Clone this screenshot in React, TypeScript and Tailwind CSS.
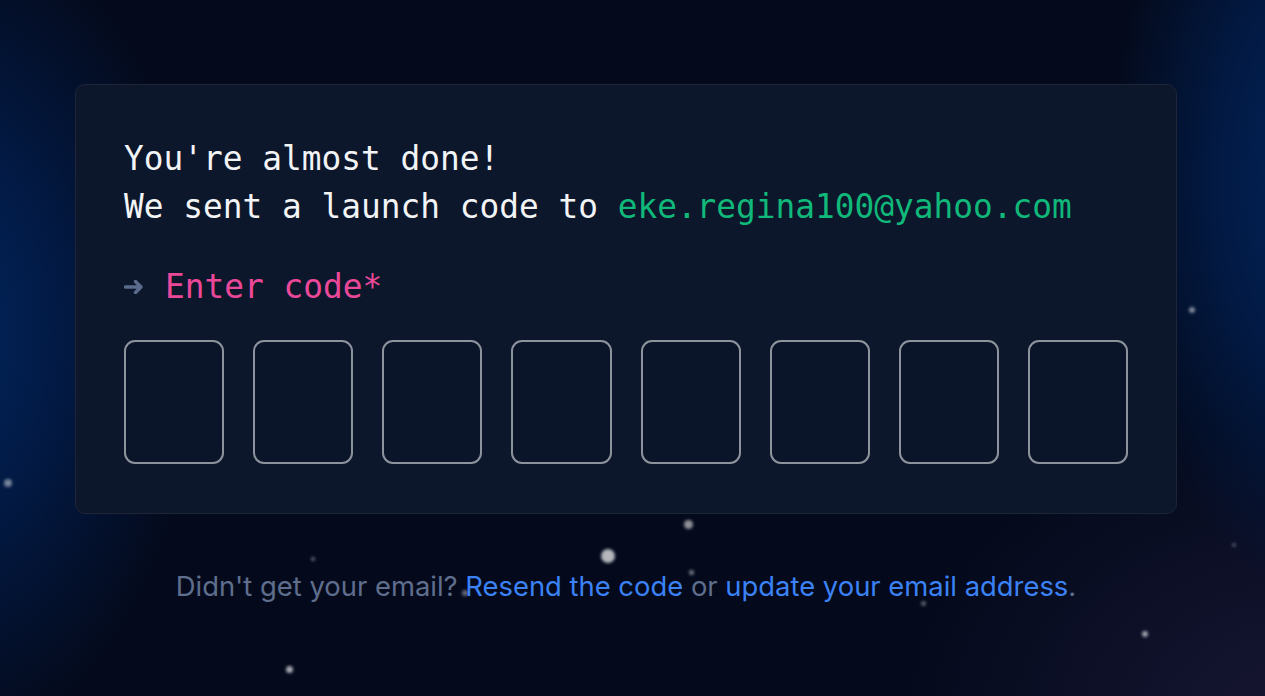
import React from "react";

const stars: { x: number; y: number; s: number; o: number }[] = [
  { x: 1192, y: 310, s: 6, o: 0.5 },
  { x: 8, y: 483, s: 8, o: 0.45 },
  { x: 688, y: 524, s: 9, o: 0.55 },
  { x: 608, y: 556, s: 14, o: 0.7 },
  { x: 313, y: 559, s: 4, o: 0.4 },
  { x: 691, y: 572, s: 5, o: 0.45 },
  { x: 1234, y: 545, s: 4, o: 0.3 },
  { x: 923, y: 603, s: 5, o: 0.35 },
  { x: 465, y: 593, s: 6, o: 0.4 },
  { x: 1145, y: 634, s: 6, o: 0.6 },
  { x: 289, y: 669, s: 7, o: 0.65 },
];

export default function App() {
  const mono = { fontFamily: '"DejaVu Sans Mono", "Liberation Mono", monospace' };
  return (
    <div
      className="relative h-[696px] w-full overflow-hidden bg-[#040a1c] bg-[radial-gradient(ellipse_260px_420px_at_-60px_330px,#01275f_0%,#021a45_45%,transparent_100%),radial-gradient(ellipse_220px_420px_at_1330px_180px,#03265e_0%,#021a44_50%,transparent_100%),radial-gradient(ellipse_400px_300px_at_1300px_720px,#171633_0%,transparent_100%)]"
    >
      {stars.map((st, i) => (
        <div
          key={i}
          className="absolute rounded-full bg-white blur-[1.5px]"
          style={{
            left: st.x - st.s / 2,
            top: st.y - st.s / 2,
            width: st.s,
            height: st.s,
            opacity: st.o,
          }}
        />
      ))}
      <div className="relative flex w-[1252px] flex-col items-center pt-[84px]">
        <div className="w-[1102px] rounded-[10px] border border-[#1e2536] bg-[#0d172c] px-12 pt-[50px] pb-[49px]">
          <div className="text-[32.8px] leading-[48px] text-[#f3f4f6]" style={mono}>
            <div>You're almost done!</div>
            <div>
              We sent a launch code to{" "}
              <span className="text-[#10b97a]">eke.regina100@yahoo.com</span>
            </div>
            <div className="mt-8 flex items-center">
              <svg width="20" height="14" viewBox="0 0 20 14" className="mr-[21px]">
                <path
                  d="M1.5 7 H17 M11.5 1.5 L17 7 L11.5 12.5"
                  fill="none"
                  stroke="#5b6b8c"
                  strokeWidth="3.4"
                  strokeLinecap="round"
                  strokeLinejoin="round"
                />
              </svg>
              <span className="text-[#ec4899]">Enter code*</span>
            </div>
          </div>
          <div className="mt-[29px] flex gap-[29px]">
            {Array.from({ length: 8 }).map((_, i) => (
              <div
                key={i}
                className="h-[124px] flex-1 rounded-[11px] border-2 border-[#8d939d] bg-[#0b1529]"
              />
            ))}
          </div>
        </div>
        <p
          className="mt-[54px] text-[27.4px] leading-[36px] text-[#5f6e8c]"
          style={{ fontFamily: 'Inter, "Liberation Sans", sans-serif' }}
        >
          Didn't get your email?{" "}
          <a className="text-[#3b82f6]">Resend the code</a> or{" "}
          <a className="text-[#3b82f6]">update your email address</a>.
        </p>
      </div>
    </div>
  );
}
